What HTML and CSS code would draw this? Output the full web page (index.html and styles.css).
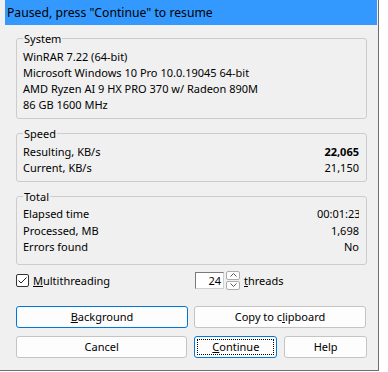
FILE: index.html
```html
<!DOCTYPE html>
<html lang="en">
<head>
  <meta charset="UTF-8">
  <meta name="viewport" content="width=device-width, initial-scale=1.0">
  <title>Paused</title>
  <link rel="stylesheet" href="styles.css">
</head>
<body>
  <div class="dialog">
    <div class="status">Paused, press "Continue" to resume</div>
    <div class="content">
      <fieldset class="group system">
        <legend>System</legend>
        <div class="line">WinRAR 7.22 (64-bit)</div>
        <div class="line">Microsoft Windows 10 Pro 10.0.19045 64-bit</div>
        <div class="line">AMD Ryzen AI 9 HX PRO 370 w/ Radeon 890M</div>
        <div class="line">86 GB 1600 MHz</div>
      </fieldset>

      <fieldset class="group speed">
        <legend>Speed</legend>
        <div class="row"><span>Resulting, KB/s</span><b>22,065</b></div>
        <div class="row"><span>Current, KB/s</span><span>21,150</span></div>
      </fieldset>

      <fieldset class="group total">
        <legend>Total</legend>
        <div class="row"><span>Elapsed time</span><span class="clip">00:01:23</span></div>
        <div class="row"><span>Processed, MB</span><span>1,698</span></div>
        <div class="row"><span>Errors found</span><span>No</span></div>
      </fieldset>

      <div class="options">
        <label class="check">
          <span class="box">
            <svg width="11" height="11" viewBox="0 0 11 11"><path d="M1.5 5.5 L4 8 L9.5 2.5" fill="none" stroke="#222" stroke-width="1"/></svg>
          </span>
          <span><u>M</u>ultithreading</span>
        </label>
        <div class="threads">
          <span class="spin-input">24</span>
          <span class="spin-btns">
            <span class="spin-btn">
              <svg width="7" height="4" viewBox="0 0 7 4"><path d="M0.5 3.5 L3.5 0.5 L6.5 3.5" fill="none" stroke="#555" stroke-width="1"/></svg>
            </span>
            <span class="spin-btn">
              <svg width="7" height="4" viewBox="0 0 7 4"><path d="M0.5 0.5 L3.5 3.5 L6.5 0.5" fill="none" stroke="#555" stroke-width="1"/></svg>
            </span>
          </span>
          <span><u>t</u>hreads</span>
        </div>
      </div>

      <div class="buttons">
        <div class="btn-row">
          <button class="btn wide default"><u>B</u>ackground</button>
          <button class="btn wide">Copy to c<u>l</u>ipboard</button>
        </div>
        <div class="btn-row">
          <button class="btn wide">Cancel</button>
          <button class="btn small focus"><span class="focus-ring"><u>C</u>ontinue</span></button>
          <button class="btn small">Help</button>
        </div>
      </div>
    </div>
  </div>
</body>
</html>
```

FILE: styles.css
```css
body {
  margin: 0;
  background: #ffffff;
  font-family: "Noto Sans", "Open Sans", sans-serif;
  font-size: 11px;
  color: #000;
}

.dialog {
  width: 378px;
  height: 370px;
  background: #f0f0f0;
  border-right: 1px solid #6e6e6e;
  border-bottom: 1px solid #6e6e6e;
}

.status {
  margin-left: 5px;
  width: 372px;
  height: 25px;
  line-height: 25px;
  padding-left: 2px;
  box-sizing: border-box;
  background: #3399ff;
  font-size: 12.2px;
}

.content {
  padding-left: 16px;
  width: 351px;
}

.group {
  margin: 7px 0 0;
  padding: 3px 7px 5px 6px;
  border: 1px solid #cccccc;
  border-radius: 3px;
}

.group.system {
  margin-top: 6px;
}

.group.total {
  padding-top: 2px;
  padding-bottom: 8px;
}

.group legend {
  padding: 0 1px;
  line-height: 15px;
}

.line,
.row {
  line-height: 16px;
  white-space: nowrap;
}

.total .row {
  line-height: 16.5px;
}

.row {
  display: flex;
  justify-content: space-between;
}

.row b {
  font-weight: bold;
}

.clip {
  width: 42px;
  overflow: hidden;
}

.options {
  display: flex;
  align-items: center;
  margin-top: 7px;
  height: 17px;
}

.check {
  display: flex;
  align-items: center;
  gap: 4px;
  width: 179px;
}

.box {
  width: 11px;
  height: 11px;
  border: 1px solid #333;
  border-radius: 2px;
  background: #fff;
  display: flex;
}

.threads {
  display: flex;
  align-items: center;
}

.spin-input {
  width: 25px;
  height: 15px;
  line-height: 15px;
  padding-right: 2px;
  text-align: right;
  background: #fff;
  border: 1px solid #7a7a7a;
  border-bottom-color: #d0d0d0;
  border-right-color: #d0d0d0;
}

.spin-btns {
  display: flex;
  flex-direction: column;
  gap: 1px;
  margin: 0 4px 0 2px;
}

.spin-btn {
  width: 12px;
  height: 7px;
  border: 1px solid #adadad;
  border-radius: 2px;
  background: #fdfdfd;
  display: flex;
  align-items: center;
  justify-content: center;
}

.buttons {
  margin-top: 17px;
  display: flex;
  flex-direction: column;
  gap: 8px;
}

.btn-row {
  display: flex;
  gap: 6px;
}

.btn {
  height: 22px;
  padding: 0;
  font-family: inherit;
  font-size: 11px;
  color: #000;
  background: #fdfdfd;
  border: 1px solid #c4c4c4;
  border-radius: 3px;
}

.wide {
  width: 172px;
}

.small {
  width: 83px;
}

.btn-row .small {
  margin-left: 1px;
}

.default,
.focus {
  border-color: #0078d7;
}

.focus {
  padding: 2px;
}

.focus-ring {
  display: flex;
  align-items: center;
  justify-content: center;
  height: 100%;
  border: 1px dotted #000;
  box-sizing: border-box;
}
```
